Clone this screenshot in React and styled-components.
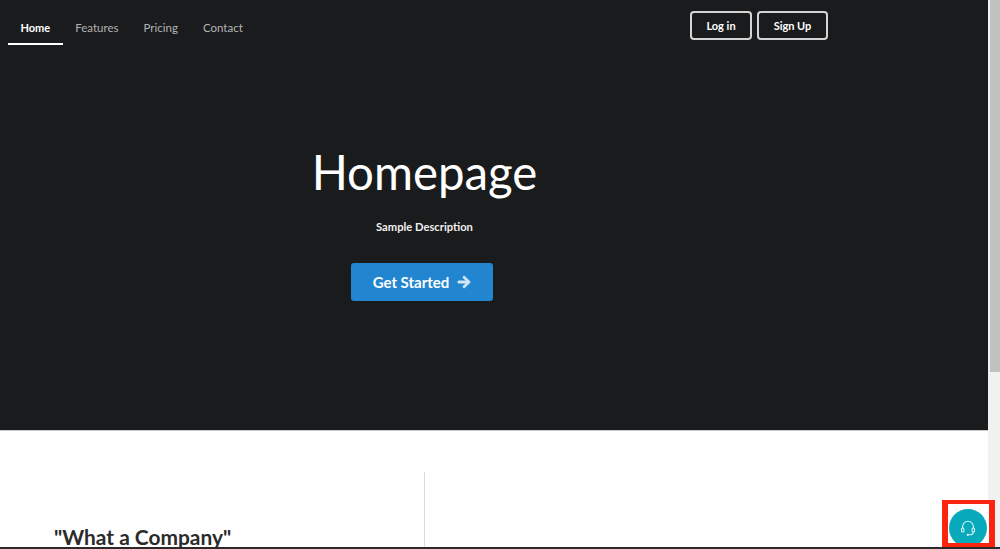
import React from "react";
import styled, { createGlobalStyle } from "styled-components";
import { FaArrowRight } from "react-icons/fa";

const GlobalStyle = createGlobalStyle`
  html, body {
    margin: 0;
    height: 100%;
    overflow: hidden;
    background: #fff;
    font-family: Lato, "Liberation Sans", sans-serif;
  }
  * { box-sizing: border-box; }
`;

const Frame = styled.div`
  display: flex;
  height: 549px;
  width: 1000px;
  border-bottom: 2px solid #2a2a2a;
`;

const Page = styled.div`
  width: 988px;
  height: 547px;
  overflow: hidden;
  flex: none;
`;

const Scrollbar = styled.div`
  flex: 1;
  background: #f1f1f1;
  padding-left: 2px;
`;

const Thumb = styled.div`
  height: 372px;
  background: #c1c1c1;
`;

const Hero = styled.section`
  height: 431px;
  background: #1a1b1d;
  border-bottom: 1px solid #c8c8c8;
  display: flex;
  flex-direction: column;
`;

const Nav = styled.nav`
  height: 45px;
  margin-top: 11px;
  padding-left: 8px;
  display: flex;
  align-items: flex-start;
`;

const NavLinks = styled.div`
  display: flex;
  width: 682px;
`;

const NavLink = styled.a`
  height: 34px;
  padding: 9px 12.5px 0;
  font-size: ${(p) => (p.$active ? "11px" : "11.5px")};
  line-height: 16px;
  font-weight: ${(p) => (p.$active ? 700 : 400)};
  color: ${(p) => (p.$active ? "#fff" : "#b3b3b3")};
  border-bottom: 2px solid ${(p) => (p.$active ? "#fff" : "transparent")};
`;

const NavActions = styled.div`
  display: flex;
  gap: 5px;
`;

const OutlineButton = styled.button`
  height: 29px;
  width: ${(p) => p.$width}px;
  padding: 0;
  background: transparent;
  border: 2px solid #d4d4d4;
  border-radius: 4px;
  color: #fff;
  font-family: inherit;
  font-size: 11px;
  font-weight: 700;
`;

const HeroBody = styled.div`
  width: 849px;
  display: flex;
  flex-direction: column;
  align-items: center;
  padding-top: 85px;
`;

const Title = styled.h1`
  margin: 0;
  font-size: 47.4px;
  line-height: 62px;
  font-weight: 400;
  color: #fff;
`;

const Description = styled.p`
  margin: 16px 0 0;
  font-size: 11.2px;
  line-height: 16px;
  font-weight: 700;
  color: #f0f0f0;
`;

const CtaButton = styled.button`
  margin: 28px 5px 0 0;
  width: 142px;
  height: 38px;
  display: flex;
  align-items: center;
  justify-content: center;
  gap: 8px;
  background: #2185d0;
  border: none;
  border-radius: 3px;
  color: #fff;
  font-family: inherit;
  font-size: 15px;
  font-weight: 700;

  svg {
    width: 14px;
    height: 14px;
    opacity: 0.8;
    stroke: currentColor;
    stroke-width: 30;
  }
`;

const Content = styled.section`
  height: 116px;
  background: #fff;
  padding-top: 41px;
  display: flex;
  overflow: hidden;
`;

const Column = styled.div`
  width: 425px;
  height: 100%;
  padding: 52px 0 0 54px;
  border-right: 1px solid #dcdcdc;
`;

const Quote = styled.h3`
  margin: 0;
  font-size: 20.9px;
  line-height: 26px;
  font-weight: 700;
  color: #2b2b2b;
`;

// annotation box drawn over the page, it clips the round button at the bottom
const SupportMark = styled.div`
  position: fixed;
  left: 942px;
  top: 500px;
  width: 53px;
  height: 47px;
  background: #fff;
  border: solid #fb2410;
  border-width: 4px 6px;
  overflow: hidden;
`;

const SupportButton = styled.div`
  position: absolute;
  left: 1px;
  top: 5px;
  width: 38px;
  height: 38px;
  border-radius: 50%;
  background: #07a9bb;
  color: #d8f3f6;
  display: flex;
  align-items: center;
  justify-content: center;
`;

// headset outline: band, ear cups and a small mic arm
function HeadsetIcon() {
  return (
    <svg width="16" height="17" viewBox="0 0 16 17" fill="none" stroke="currentColor" strokeWidth="1.1">
      <path d="M2.6 8V6.6a5.4 5.4 0 0 1 10.8 0V8" />
      <rect x="1.5" y="8" width="2.4" height="4" rx="1" />
      <rect x="12.1" y="8" width="2.4" height="4" rx="1" />
      <path d="M13.3 12c0 1.6-1.6 2.8-3.4 2.8H8.4" />
      <circle cx="7.8" cy="14.8" r="0.6" fill="currentColor" />
    </svg>
  );
}

export default function App() {
  return (
    <>
      <GlobalStyle />
      <Frame>
        <Page>
          <Hero>
            <Nav>
              <NavLinks>
                <NavLink $active>Home</NavLink>
                <NavLink>Features</NavLink>
                <NavLink>Pricing</NavLink>
                <NavLink>Contact</NavLink>
              </NavLinks>
              <NavActions>
                <OutlineButton $width={62}>Log in</OutlineButton>
                <OutlineButton $width={71}>Sign Up</OutlineButton>
              </NavActions>
            </Nav>
            <HeroBody>
              <Title>Homepage</Title>
              <Description>Sample Description</Description>
              <CtaButton>
                Get Started <FaArrowRight />
              </CtaButton>
            </HeroBody>
          </Hero>
          <Content>
            <Column>
              <Quote>"What a Company"</Quote>
            </Column>
          </Content>
        </Page>
        <Scrollbar>
          <Thumb />
        </Scrollbar>
      </Frame>
      <SupportMark>
        <SupportButton>
          <HeadsetIcon />
        </SupportButton>
      </SupportMark>
    </>
  );
}
